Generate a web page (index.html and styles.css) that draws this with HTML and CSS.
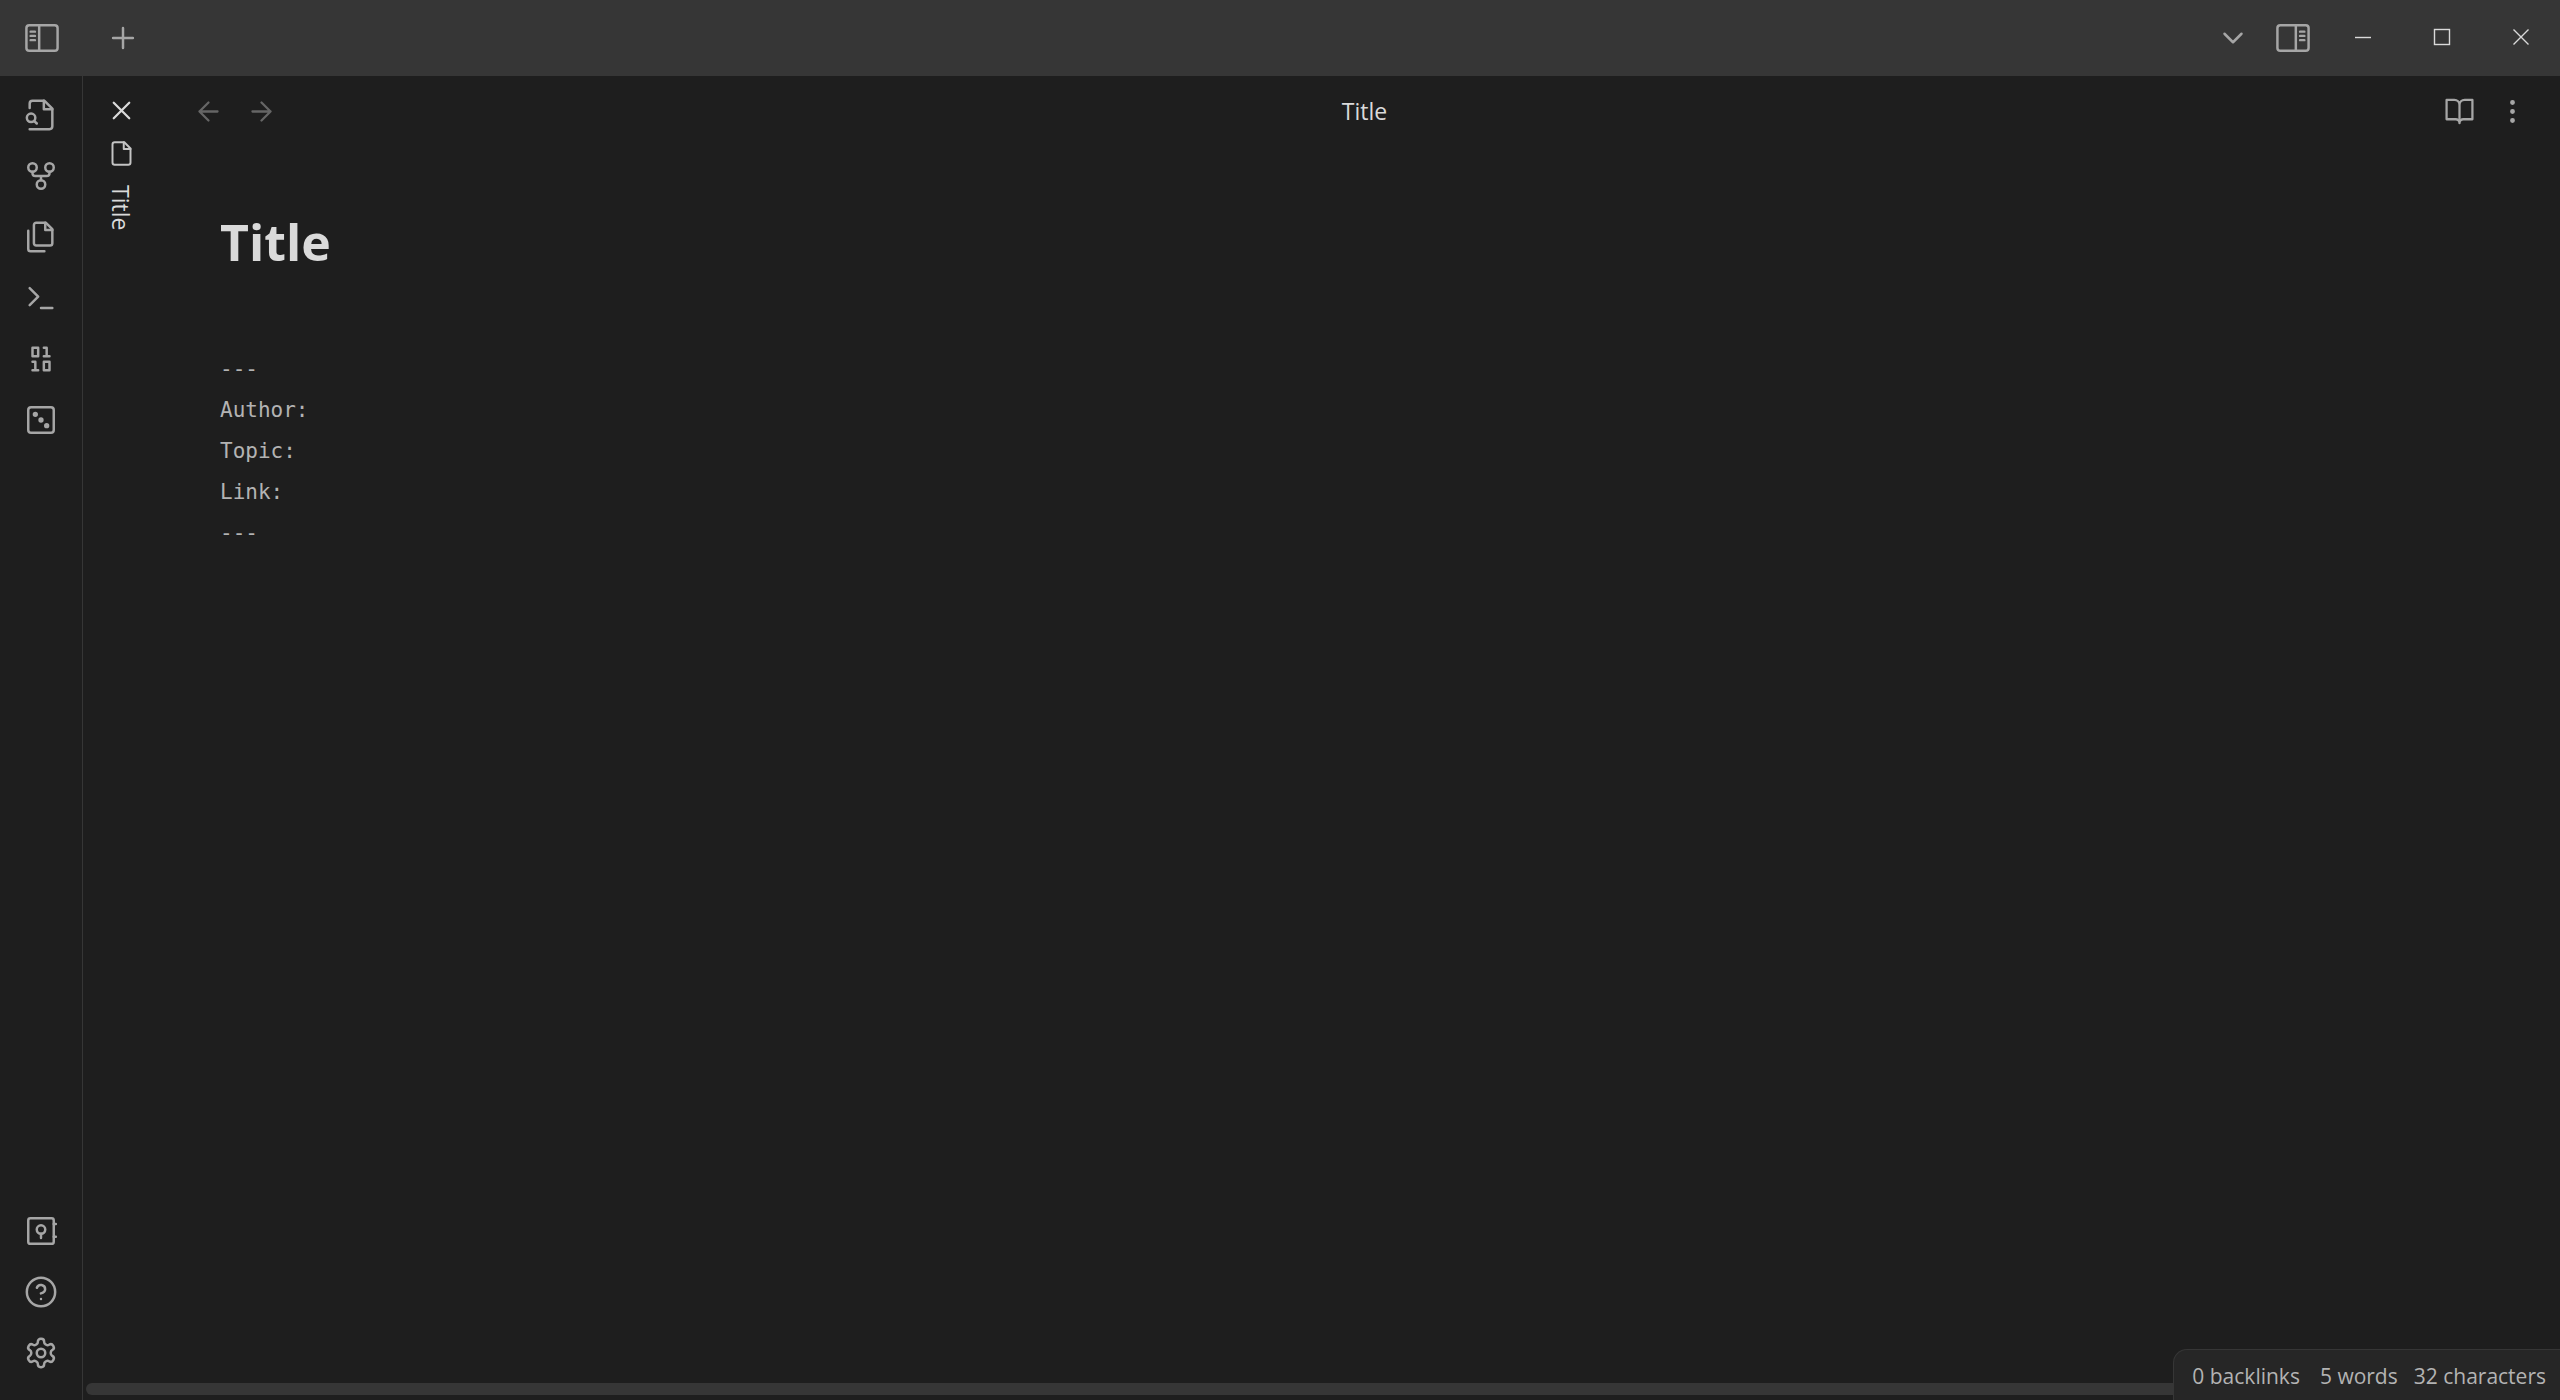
FILE: index.html
```html
<!DOCTYPE html>
<html lang="en">

<head>
    <meta charset="UTF-8">
    <meta name="viewport" content="width=device-width, initial-scale=1.0">
    <title>Title</title>
    <link rel="stylesheet" href="styles.css">
</head>

<body>

    <!-- Title Bar -->
    <header class="titlebar">
        <button class="bar-btn sidebar-toggle" aria-label="Toggle left sidebar">
            <svg class="icon icon-l" viewBox="0 0 24 24"><rect x="1" y="3" width="22" height="18" rx="2"/><path d="M10 3v18M4 7.5h3M4 10.5h3M4 13.5h3"/></svg>
        </button>
        <button class="bar-btn new-tab" aria-label="New tab">
            <svg class="icon icon-l" viewBox="0 0 24 24"><path d="M5 12h14M12 5v14"/></svg>
        </button>
        <div class="spacer"></div>
        <button class="bar-btn" aria-label="Tab list">
            <svg class="icon icon-l" viewBox="0 0 24 24"><path d="M6 9l6 6 6-6"/></svg>
        </button>
        <button class="bar-btn" aria-label="Toggle right sidebar">
            <svg class="icon icon-l" viewBox="0 0 24 24"><rect x="1" y="3" width="22" height="18" rx="2"/><path d="M14 3v18M17 7.5h3M17 10.5h3M17 13.5h3"/></svg>
        </button>
        <div class="window-controls">
            <button class="window-btn" aria-label="Minimize"><svg viewBox="0 0 18 18"><path d="M1 9.500h16"/></svg></button>
            <button class="window-btn" aria-label="Maximize"><svg viewBox="0 0 18 18"><rect x="1.500" y="1.500" width="15" height="15"/></svg></button>
            <button class="window-btn" aria-label="Close"><svg viewBox="0 0 18 18"><path d="M1.500 1.500l15 15M16.500 1.500l-15 15"/></svg></button>
        </div>
    </header>

    <div class="workspace">

        <!-- Ribbon -->
        <nav class="ribbon">
            <button class="ribbon-btn" aria-label="Quick switcher">
                <svg class="icon icon-l" viewBox="0 0 24 24"><path d="M4 7V4a2 2 0 0 1 2-2h8.500L20 7.500V20a2 2 0 0 1-2 2H4"/><path d="M14 2v6h6"/><circle cx="5" cy="14" r="3"/><path d="M9 18l-1.500-1.500"/></svg>
            </button>
            <button class="ribbon-btn" aria-label="Graph view">
                <svg class="icon icon-l" viewBox="0 0 24 24"><circle cx="12" cy="18" r="3"/><circle cx="6" cy="6" r="3"/><circle cx="18" cy="6" r="3"/><path d="M18 9v1a2 2 0 0 1-2 2H8a2 2 0 0 1-2-2V9M12 12v3"/></svg>
            </button>
            <button class="ribbon-btn" aria-label="Insert template">
                <svg class="icon icon-l" viewBox="0 0 24 24"><path d="M15.500 2H8.600a1.600 1.600 0 0 0-1.600 1.600v12.800A1.600 1.600 0 0 0 8.600 18h9.800a1.600 1.600 0 0 0 1.600-1.600V6.500z"/><path d="M15 2v5h5"/><path d="M3 7.600v12.800A1.600 1.600 0 0 0 4.600 22h9.800"/></svg>
            </button>
            <button class="ribbon-btn" aria-label="Command palette">
                <svg class="icon icon-l" viewBox="0 0 24 24"><path d="M4 17l6-6-6-6M12 19h8"/></svg>
            </button>
            <button class="ribbon-btn" aria-label="Templater">
                <svg class="icon icon-l" viewBox="0 0 24 24"><path d="M6 4h4v6H6zM14 14h4v6h-4zM6 20h4M14 10h4M6 14h2v6M14 4h2v6"/></svg>
            </button>
            <button class="ribbon-btn" aria-label="Random note">
                <svg class="icon icon-l" viewBox="0 0 24 24"><rect x="3" y="3" width="18" height="18" rx="2"/><g class="dots"><circle cx="8" cy="8" r="1"/><circle cx="12" cy="12" r="1"/><circle cx="16" cy="16" r="1"/></g></svg>
            </button>
            <div class="spacer"></div>
            <button class="ribbon-btn" aria-label="Open another vault">
                <svg class="icon icon-l" viewBox="0 0 24 24"><rect x="3" y="3" width="18" height="18" rx="1.500"/><circle cx="12" cy="11" r="3"/><path d="M12 14v3M21 7h1.500M21 16h1.500"/></svg>
            </button>
            <button class="ribbon-btn" aria-label="Help">
                <svg class="icon icon-l" viewBox="0 0 24 24"><circle cx="12" cy="12" r="10"/><path d="M9.090 9a3 3 0 0 1 5.830 1c0 2-3 3-3 3M12 17h.01"/></svg>
            </button>
            <button class="ribbon-btn" aria-label="Settings">
                <svg class="icon icon-l" viewBox="0 0 24 24"><path d="M12.220 2h-.440a2 2 0 0 0-2 2v.180a2 2 0 0 1-1 1.730l-.430.250a2 2 0 0 1-2 0l-.150-.080a2 2 0 0 0-2.730.730l-.220.380a2 2 0 0 0 .730 2.730l.150.100a2 2 0 0 1 1 1.720v.510a2 2 0 0 1-1 1.740l-.150.090a2 2 0 0 0-.730 2.730l.220.380a2 2 0 0 0 2.730.730l.150-.080a2 2 0 0 1 2 0l.430.250a2 2 0 0 1 1 1.730V20a2 2 0 0 0 2 2h.440a2 2 0 0 0 2-2v-.180a2 2 0 0 1 1-1.730l.430-.250a2 2 0 0 1 2 0l.150.080a2 2 0 0 0 2.730-.730l.220-.390a2 2 0 0 0-.730-2.730l-.150-.080a2 2 0 0 1-1-1.740v-.500a2 2 0 0 1 1-1.740l.150-.090a2 2 0 0 0 .730-2.730l-.220-.380a2 2 0 0 0-2.730-.730l-.150.080a2 2 0 0 1-2 0l-.430-.250a2 2 0 0 1-1-1.730V4a2 2 0 0 0-2-2z"/><circle cx="12" cy="12" r="3"/></svg>
            </button>
        </nav>

        <!-- Stacked Tab -->
        <div class="tab">
            <button class="tab-close" aria-label="Close tab">
                <svg class="icon icon-m" viewBox="0 0 24 24"><path d="M18 6L6 18M6 6l12 12"/></svg>
            </button>
            <svg class="icon icon-s" viewBox="0 0 24 24"><path d="M14.500 2H6a2 2 0 0 0-2 2v16a2 2 0 0 0 2 2h12a2 2 0 0 0 2-2V7.500z"/><path d="M14 2v6h6"/></svg>
            <span class="tab-title">Title</span>
        </div>

        <!-- Note -->
        <main class="note">
            <div class="note-header">
                <div class="header-group">
                    <button class="header-btn nav-btn" aria-label="Back" disabled>
                        <svg class="icon icon-m" viewBox="0 0 24 24"><path d="M12 19l-7-7 7-7M19 12H5"/></svg>
                    </button>
                    <button class="header-btn nav-btn" aria-label="Forward" disabled>
                        <svg class="icon icon-m" viewBox="0 0 24 24"><path d="M5 12h14M12 5l7 7-7 7"/></svg>
                    </button>
                </div>
                <div class="note-name">Title</div>
                <div class="header-group">
                    <button class="header-btn" aria-label="Reading view">
                        <svg class="icon icon-m" viewBox="0 0 24 24"><path d="M2 3h6a4 4 0 0 1 4 4v14a3 3 0 0 0-3-3H2zM22 3h-6a4 4 0 0 0-4 4v14a3 3 0 0 1 3-3h7z"/></svg>
                    </button>
                    <button class="header-btn" aria-label="More options">
                        <svg class="icon icon-m" viewBox="0 0 24 24"><g class="dots"><circle cx="12" cy="12" r="1"/><circle cx="12" cy="5" r="1"/><circle cx="12" cy="19" r="1"/></g></svg>
                    </button>
                </div>
            </div>
            <article class="note-body">
                <h1>Title</h1>
                <pre class="frontmatter">---
Author:
Topic:
Link:
---</pre>
            </article>
        </main>

        <div class="scrollbar"></div>

        <!-- Status Bar -->
        <footer class="status-bar">
            <span class="backlinks">0 backlinks</span>
            <span>5 words</span>
            <span>32 characters</span>
        </footer>
    </div>

</body>

</html>
```

FILE: styles.css
```css
* {
    box-sizing: border-box;
}

body {
    display: flex;
    flex-direction: column;
    height: 100vh;
    margin: 0;
    background: #1e1e1e;
    color: #dadada;
    font-family: "Open Sans", "Noto Sans", sans-serif;
    font-size: 23px;
    overflow: hidden;
}

button {
    display: flex;
    align-items: center;
    justify-content: center;
    padding: 0;
    border: none;
    background: none;
    color: #a6a6a6;
}

.spacer {
    flex: 1;
}

/* Icons */
.icon {
    fill: none;
    stroke: currentColor;
    stroke-width: 1.75;
    stroke-linecap: round;
    stroke-linejoin: round;
    overflow: visible;
}

.icon-s {
    width: 27px;
    height: 27px;
}

.icon-m {
    width: 31px;
    height: 31px;
}

.icon-l {
    width: 34px;
    height: 34px;
}

.dots {
    fill: currentColor;
}

/* Title Bar */
.titlebar {
    display: flex;
    flex-shrink: 0;
    height: 76px;
    background: #363636;
}

.bar-btn {
    width: 60px;
}

.sidebar-toggle {
    width: 84px;
}

.new-tab {
    width: 78px;
}

.window-controls {
    display: flex;
    height: 73px;
}

.window-btn {
    width: 79px;
}

.window-btn svg {
    width: 18px;
    height: 18px;
    fill: none;
    stroke: #dadada;
    stroke-width: 1.4;
}

.workspace {
    position: relative;
    display: flex;
    flex: 1;
    min-height: 0;
}

/* Ribbon */
.ribbon {
    display: flex;
    flex-direction: column;
    width: 83px;
    padding: 8px 0 17px;
    border-right: 1px solid #363636;
}

.ribbon-btn {
    height: 61px;
}

/* Stacked Tab */
.tab {
    display: flex;
    flex-direction: column;
    align-items: center;
    width: 76px;
    padding-top: 18px;
}

.tab-close {
    width: 32px;
    height: 32px;
    margin-bottom: 14px;
    color: #dadada;
}

.tab .icon-s {
    color: #c4c4c4;
}

.tab-title {
    margin-top: 18px;
    font-weight: 500;
    writing-mode: vertical-rl;
}

/* Note */
.note {
    flex: 1;
}

.note-header {
    display: flex;
    align-items: center;
    height: 70px;
    padding: 0 21px 0 23px;
}

.header-group {
    display: flex;
}

.header-btn {
    width: 53px;
    height: 40px;
}

.nav-btn {
    color: #666;
}

.note-name {
    flex: 1;
    padding-left: 8px;
    text-align: center;
}

.note-body {
    padding: 60px 61px;
}

.note-body h1 {
    margin: 0 0 71px;
    font-size: 50px;
    line-height: 72px;
}

.frontmatter {
    margin: 0;
    color: #b3b3b3;
    font-family: "DejaVu Sans Mono", monospace;
    font-size: 21px;
    line-height: 41px;
}

/* Horizontal scrollbar along the bottom of the note */
.scrollbar {
    position: absolute;
    left: 86px;
    right: 0;
    bottom: 5px;
    height: 12px;
    border-radius: 6px;
    background: #363636;
}

/* Status Bar */
.status-bar {
    position: absolute;
    right: 0;
    bottom: 0;
    display: flex;
    gap: 16px;
    height: 51px;
    padding: 0 14px 0 18px;
    border: 1px solid #363636;
    border-width: 1px 0 0 1px;
    border-top-left-radius: 14px;
    background: #262626;
    color: #b3b3b3;
    font-size: 21px;
    line-height: 53px;
}

.backlinks {
    margin-right: 4px;
}
```
